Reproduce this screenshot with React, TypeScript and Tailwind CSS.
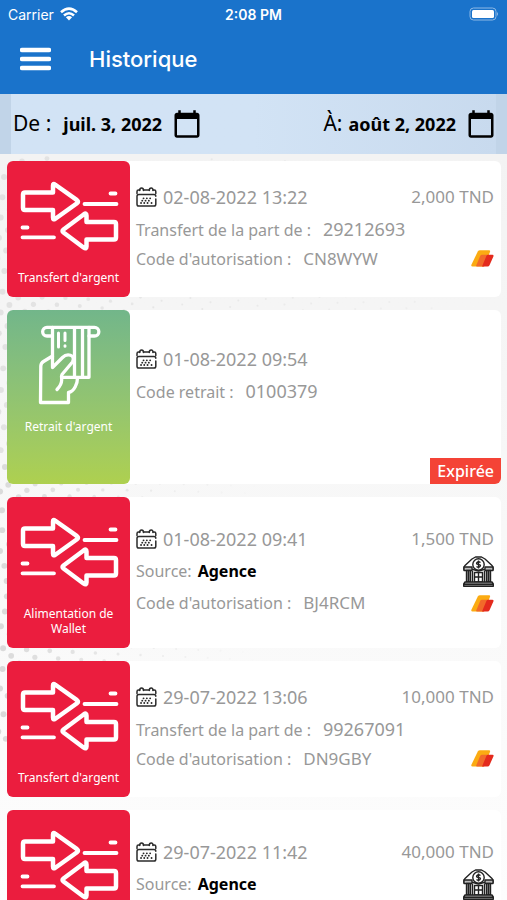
import React from "react";
import { MdCalendarToday } from "react-icons/md";

type Line = { label: string; value: string; kind: "phone" | "code" | "source" };
type Entry = {
  kind: "transfer" | "withdrawal";
  title?: string;
  date: string;
  amount?: string;
  status?: string;
  lines: Line[];
};

const entries: Entry[] = [
  {
    kind: "transfer",
    title: "Transfert d'argent",
    date: "02-08-2022 13:22",
    amount: "2,000 TND",
    lines: [
      { label: "Transfert de la part de :", value: "29212693", kind: "phone" },
      { label: "Code d'autorisation :", value: "CN8WYW", kind: "code" },
    ],
  },
  {
    kind: "withdrawal",
    title: "Retrait d'argent",
    date: "01-08-2022 09:54",
    status: "Expirée",
    lines: [{ label: "Code retrait :", value: "0100379", kind: "phone" }],
  },
  {
    kind: "transfer",
    title: "Alimentation de Wallet",
    date: "01-08-2022 09:41",
    amount: "1,500 TND",
    lines: [
      { label: "Source:", value: "Agence", kind: "source" },
      { label: "Code d'autorisation :", value: "BJ4RCM", kind: "code" },
    ],
  },
  {
    kind: "transfer",
    title: "Transfert d'argent",
    date: "29-07-2022 13:06",
    amount: "10,000 TND",
    lines: [
      { label: "Transfert de la part de :", value: "99267091", kind: "phone" },
      { label: "Code d'autorisation :", value: "DN9GBY", kind: "code" },
    ],
  },
  {
    kind: "transfer",
    date: "29-07-2022 11:42",
    amount: "40,000 TND",
    lines: [{ label: "Source:", value: "Agence", kind: "source" }],
  },
];

function ArrowsIcon() {
  return (
    <svg viewBox="0 0 100 80" className="h-20 w-[100px]" fill="none" stroke="#fff" strokeWidth="4.500" strokeLinejoin="round" strokeLinecap="round" aria-hidden="true">
      <path d="M6 16.5H34V9.5Q34 7 36 8.5L58 24.2Q60 25.7 58 27.2L36 43Q34 44 34 41.500V34H6Q4 34 4 32V18.500Q4 16.500 6 16.500Z" />
      <path d="M95 46H67.500V39.500Q67.500 36.500 65 38.200L44.500 53.500Q42.500 55 44.500 56.500L64.500 71.500Q67.500 73.500 67.500 70.500V63.500H95Q97 63.500 97 61.500V48Q97 46 95 46Z" />
      <path strokeWidth="3.800" d="M65.500 28H97.500M91.500 17.500H96.500M3.500 51.500H8.500M3.500 61.300H35" />
    </svg>
  );
}

function WithdrawIcon() {
  return (
    <svg viewBox="0 0 100 80" className="h-20 w-[100px]" fill="none" stroke="#fff" strokeWidth="3.300" strokeLinejoin="round" strokeLinecap="round" aria-hidden="true">
      <path d="M33.500 11H28A4.350 4.350 0 0 1 28 2.300H75.500A4.350 4.350 0 0 1 75.500 11H70" />
      <path d="M33.500 2.300V42.500L43.500 32.500C48 28 57 29.500 53.500 37L43 49.500Q42 51 42.700 55Q42.500 60 38 64.500" />
      <path d="M33.500 31L24.500 36.500Q22 38 21.800 41L21.500 77.500H49.500V67.500C55.500 66.500 58.500 58 58.500 53" />
      <path d="M70 2.300V52.300H43.500M55.500 3V52M63.500 3V52" />
      <path strokeWidth="3" d="M39.500 8V22M46 8V15.500M46 20.800V21.200" />
    </svg>
  );
}

function CalendarIcon() {
  return (
    <svg viewBox="0 0 21 20" className="h-5 w-[21px] shrink-0" fill="none" stroke="#2b2b2b" strokeWidth="1.500" strokeLinecap="round" strokeLinejoin="round" aria-hidden="true">
      <path d="M1 6.500V4.500Q1 3 2.500 3H3.700M7.500 3H13.300M17 3H18.300Q19.800 3 19.800 4.500V6.500" />
      <path d="M3.700 3.500Q3.700 1 5.600 1T7.500 3.500M13.300 3.500Q13.300 1 15.200 1T17 3.500" />
      <path d="M3 7.500H18Q19.800 7.500 19.800 9.200M19.800 12V17.200Q19.800 19 18 19H2.800Q1 19 1 17.200V9.200Q1 7.500 3 7.500" />
      <path strokeWidth="1.800" d="M7.500 11.300H7.600M10.800 11.300H10.900M14.100 11.300H14.200M6.200 13.700H6.300M9.500 13.700H9.600M12.800 13.700H12.900M5 16H5.100M8.200 16H8.300M11.500 16H11.600M15.500 16H15.600" />
    </svg>
  );
}

function BrandIcon() {
  return (
    <svg viewBox="0 0 23 17" className="h-[17px] w-[23px]" role="img" aria-label="Wallet">
      <path fill="#fbab12" d="M6.800 1.500Q7.500 .3 9 .3H18Q19.500 .3 19 1.700L14 15.200Q13.500 16.500 12 16.500H1.500Q-.3 16.500 .5 14.500Z" />
      <path fill="#f26a2a" d="M9.300 5.800Q9.800 4.700 11 4.700H17.500L13 16.500H6Q4.800 16.500 5.300 15.200Z" />
      <path fill="#e42a1d" d="M15.500 5.800Q16 4.700 17.200 4.700H21.500Q23 4.700 22.500 6.200L18.500 15.200Q18 16.500 16.500 16.500H11Z" />
    </svg>
  );
}

function BankIcon() {
  return (
    <svg viewBox="0 0 31 31" className="h-[31px] w-[31px]" fill="none" stroke="#222" strokeWidth="1.400" strokeLinejoin="round" role="img" aria-label="Agence">
      <path fill="#fff" d="M9 3L12.500 1H18.500L22 3L29 9.500Q30.500 11 30 13.500H21L15.500 15L10 13.500H1Q.5 11 2 9.500Z" />
      <path fill="#bbb" d="M1 11H9V14.500H1ZM22 11H30V14.500H22Z" />
      <circle cx="15.500" cy="8.500" r="5.700" fill="#fff" />
      <path strokeWidth="1.300" d="M17.500 6.500Q15.500 5 14 6.500T15.500 8.500T17 10.500T13.500 10.500M15.500 4.500V12.500" />
      <path fill="#999" d="M3.500 14.500H7.500V26H3.500ZM23.500 14.500H27.500V26H23.500Z" />
      <path d="M5.500 15V26M25.500 15V26" />
      <path fill="#fff" d="M11.500 16.500H19.500V26H11.500Z" />
      <path d="M15.500 16.500V26M11.500 21H19.500M9.500 15V26M21.500 15V26" />
      <path fill="#aaa" d="M2 26H29L30.300 28V30.300H.7V28ZM.7 28.300H30.300" />
    </svg>
  );
}

/* Halftone dots on arcs that spread from the left edge and fade to the right. */
function Backdrop() {
  const dots: { x: number; y: number; r: number; o: number }[] = [];
  for (let ring = 0; ring < 54; ring++) {
    const radius = 60 + ring * 11;
    const step = 17 / radius;
    for (let angle = -1.5 + (ring % 2) * step * 0.5; angle < 0.9; angle += step) {
      const x = -130 + radius * Math.cos(angle);
      const y = 436 + radius * Math.sin(angle) * 0.9;
      if (x < -4 || x > 507 || y < 4 || y > 640) continue;
      const fade = y > 300 ? 1 - x / 260 : 0.7 - x / 900;
      if (fade <= 0) continue;
      dots.push({ x, y, r: Math.max(1, 3 - x / 80), o: fade });
    }
  }
  return (
    <svg className="pointer-events-none absolute inset-0 h-full w-full" aria-hidden="true">
      {dots.map((d, i) => (
        <circle key={i} cx={d.x} cy={d.y} r={d.r} fill="#dadada" opacity={d.o} />
      ))}
    </svg>
  );
}

const valueStyles = {
  phone: "text-[18px]",
  code: "text-[17px]",
  source: "font-bold text-black",
};

function Card({ entry }: { entry: Entry }) {
  const withdrawal = entry.kind === "withdrawal";
  const source = entry.lines.some((l) => l.kind === "source");
  const top = withdrawal ? "pt-[31px]" : source ? "pt-[26px]" : "pt-[18px]";
  return (
    <li className="flex rounded-md bg-white">
      <div
        className={
          "flex w-[123px] shrink-0 flex-col items-center rounded-md px-2 pt-[15px] pb-3 text-white " +
          (withdrawal ? "bg-linear-to-b from-[#72b68a] to-[#aed04f]" : "bg-[#eb1d3e]")
        }
      >
        {withdrawal ? <WithdrawIcon /> : <ArrowsIcon />}
        {entry.title && <h2 className="mt-[14px] text-center text-[12px] leading-[15px]">{entry.title}</h2>}
      </div>
      <div className={"flex min-w-0 flex-1 flex-col pl-1.5 text-[#989898] " + top}>
        <div className={"flex items-center gap-1.5 pr-[7px] " + (source ? "h-8" : "h-9")}>
          <CalendarIcon />
          <time className="text-[18px]">{entry.date}</time>
          <span className="ml-auto text-[17px]">{entry.amount}</span>
        </div>
        {entry.lines.map((line) => (
          <div key={line.label} className={"flex items-center justify-between pr-[7px] " + (source ? "h-8" : "h-[29px]")}>
            <p className={"flex items-baseline text-[16px] " + (line.kind === "source" ? "gap-1.5" : "gap-3")}>
              <span>{line.label}</span>
              <span className={valueStyles[line.kind]}>{line.value}</span>
            </p>
            {line.kind === "code" && <BrandIcon />}
            {line.kind === "source" && <BankIcon />}
          </div>
        ))}
        {entry.status && (
          <span className="mt-13 self-end rounded-br-md bg-[#f44336] px-[7px] text-[16px] leading-[26px] font-medium text-white">
            {entry.status}
          </span>
        )}
      </div>
    </li>
  );
}

export default function App() {
  return (
    <div className="flex h-screen flex-col overflow-hidden bg-[#f3f3f3] font-['Noto_Sans',sans-serif]">
      <header className="bg-[#1a73cb] font-['Inter',sans-serif] text-white">
        <div className="grid h-7 grid-cols-3 items-center px-2 text-[14px]">
          <span className="flex items-center gap-1.5">
            Carrier
            <svg viewBox="0 0 18 14" className="h-[14px] w-[18px]" fill="none" stroke="#fff" strokeWidth="2.600" aria-hidden="true">
              <path d="M1 5.200Q9-2 17 5.200M4 8.500Q9 4 14 8.500" />
              <path fill="#fff" stroke="none" d="M9 13.500L5.900 10.300Q9 7.900 12.100 10.300Z" />
            </svg>
          </span>
          <span className="text-center font-semibold">2:08 PM</span>
          <svg viewBox="0 0 30 14" className="h-[14px] w-[30px] justify-self-end" aria-hidden="true">
            <rect x="1" y="1" width="26" height="12" rx="3.500" fill="none" stroke="#8db9e5" />
            <rect x="3" y="3" width="22" height="8" rx="1.500" fill="#fff" />
            <path d="M28 5Q30 7 28 9Z" fill="#8db9e5" />
          </svg>
        </div>
        <div className="flex h-[66px] items-center gap-[38px] px-5 pb-1">
          <button type="button" aria-label="Menu">
            <svg viewBox="0 0 31 24" className="h-6 w-[31px]" stroke="#fff" strokeWidth="4.500" strokeLinecap="round" aria-hidden="true">
              <path d="M2 3H29M2 12H29M2 21H29" />
            </svg>
          </button>
          <h1 className="text-[22px] leading-7 font-medium">Historique</h1>
        </div>
      </header>

      <div className="flex h-[60px] shrink-0 items-center justify-between border-x-[11px] border-[#c1d4e8] bg-linear-to-r from-[#d2e3f5] via-[#d2e3f5] to-[#c8daee] text-black">
        <button type="button" className="ml-0.5 flex items-center">
          <span className="text-[21px]">De :</span>
          <span className="ml-3 text-[18px] font-bold">juil. 3, 2022</span>
          <MdCalendarToday className="ml-2.5 size-[30px]" />
        </button>
        <button type="button" className="flex items-center">
          <span className="text-[21px]">À:</span>
          <span className="ml-1.5 text-[18px] font-bold">août 2, 2022</span>
          <MdCalendarToday className="ml-2.5 size-[30px]" />
        </button>
      </div>

      <main className="relative min-h-0 flex-1 overflow-y-auto bg-linear-to-b from-[#f3f3f3] to-[#fdfdfd] [scrollbar-width:none]">
        <Backdrop />
        <ul className="relative flex flex-col gap-[13px] py-[7px] pr-1.5 pl-[7px]">
          {entries.map((entry) => (
            <Card key={entry.date} entry={entry} />
          ))}
        </ul>
      </main>
    </div>
  );
}
